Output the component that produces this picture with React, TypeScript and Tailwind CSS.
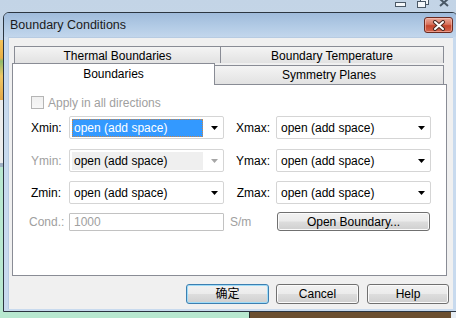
import React from "react";

const btnBg =
  "bg-[linear-gradient(to_bottom,#f2f2f2_0%,#ebebeb_48%,#dddddd_52%,#cfcfcf_100%)]";

function Arrow({ disabled }: { disabled?: boolean }) {
  return (
    <svg width="7" height="4" viewBox="0 0 7 4" className="shrink-0">
      <path d="M0 0 H7 L3.5 4 Z" fill={disabled ? "#a6a6a6" : "#000"} />
    </svg>
  );
}

function Combo({ selected, disabled }: { selected?: boolean; disabled?: boolean }) {
  return (
    <div className="w-[155px] h-[23px] border border-[#d5d5d5] rounded-[2px] bg-white flex items-center pl-[2px] pr-[5px]">
      {selected ? (
        <div className="w-[131px] h-[18px] bg-[#3399ff] border border-dotted border-[#c9864a] flex items-center pl-[1px] text-white leading-none">
          open (add space)
        </div>
      ) : disabled ? (
        <div className="w-[131px] h-[18px] bg-[#efefef] flex items-center pl-[2px] text-black leading-none">
          open (add space)
        </div>
      ) : (
        <div className="w-[131px] h-[18px] flex items-center pl-[2px] text-black leading-none">
          open (add space)
        </div>
      )}
      <div className="ml-auto">
        <Arrow disabled={disabled} />
      </div>
    </div>
  );
}

export default function App() {
  return (
    <div className="relative w-[456px] h-[318px] overflow-hidden bg-[linear-gradient(to_bottom,#c3d4e6,#d3dfec)] font-['Liberation_Sans','Noto_Sans_CJK_SC',sans-serif] text-[12px] text-black">
      {/* desktop: caption buttons of window behind */}
      <svg className="absolute left-[392px] top-0" width="64" height="10" viewBox="0 0 64 10">
        <rect x="3.5" y="2.5" width="10" height="4" fill="#f4f7fa" stroke="#4a5866" />
        <rect x="28.5" y="-1.5" width="8" height="6" fill="#f4f7fa" stroke="#4a5866" />
        <rect x="25.5" y="1.5" width="8" height="6" fill="#f4f7fa" stroke="#4a5866" />
        <path d="M48 -1 L56 6 M56 -1 L48 6" stroke="#4a5866" strokeWidth="2" />
      </svg>
      {/* desktop: left strip */}
      <div className="absolute left-0 top-[40px] w-[3px] h-[60px] bg-[linear-gradient(to_bottom,#f3c35a,#e9b046_30%,#8dbb6b_35%,#f0c866_60%,#e4a94a)]" />
      <div className="absolute left-0 top-[100px] w-[3px] h-[63px] bg-[#ececec]" />
      <div className="absolute left-0 top-[163px] w-[3px] h-[4px] bg-[#9fb0c4]" />
      <div className="absolute left-0 top-[167px] w-[3px] h-[151px] bg-[#b8e8d0]" />
      {/* desktop: bottom */}
      <div className="absolute left-0 top-[312px] w-[249px] h-[6px] bg-[#b8e8d0]" />
      <div className="absolute left-[249px] top-[312px] w-[202px] h-[6px] bg-[#6b4f30] border-l border-[#2a2a2a]" />
      <div className="absolute left-[451px] top-[312px] w-[5px] h-[6px] bg-[#e6edf4]" />

      {/* dialog */}
      <div className="absolute left-[3px] top-[12px] w-[455px] h-[300px] rounded-t-[6px] border border-[#2b3540] bg-[#c8daee] flex flex-col">
        <div className="h-[24px] shrink-0 flex items-center justify-between pl-[6px] pr-[4px] rounded-t-[5px] bg-[linear-gradient(to_bottom,#9fbbdb,#b4cce6_60%,#c2d6ec)]">
          <span className="text-[12.5px] text-[#1b1b1b] leading-none">Boundary Conditions</span>
          <div className="w-[29px] h-[16px] rounded-[3px] border border-[#6b2a20] bg-[linear-gradient(to_bottom,#eaa99a_0%,#d9735e_45%,#c4452d_55%,#d4664e_100%)] shadow-[inset_0_0_0_1px_rgba(255,210,200,0.5)] flex items-center justify-center">
            <svg width="14" height="11" viewBox="0 0 14 11">
              <path d="M3 2 L11 9 M11 2 L3 9" stroke="#4a2a24" strokeWidth="4" strokeLinecap="round" />
              <path d="M3 2 L11 9 M11 2 L3 9" stroke="#ffffff" strokeWidth="2" strokeLinecap="round" />
            </svg>
          </div>
        </div>

        <div className="flex-1 flex flex-col pl-[4px] pr-[4px] pb-[2px]">
          <div className="flex-1 bg-[#f0f0f0] border-l border-t border-[#b7cbe2] flex flex-col pt-[8px] pl-[3px]">
            {/* tabs row 1 */}
            <div className="flex h-[17px] ml-[2px]">
              <div className={`w-[206px] h-[17px] border-t border-l border-[#898c95] ${"bg-[linear-gradient(to_bottom,#f4f4f4,#e2e2e2)]"} flex items-center justify-center pt-[2px] leading-none`}>
                Thermal Boundaries
              </div>
              <div className="w-[224px] h-[17px] border-t border-l border-r border-[#898c95] bg-[linear-gradient(to_bottom,#f4f4f4,#e2e2e2)] flex items-center justify-center pt-[2px] leading-none">
                Boundary Temperature
              </div>
            </div>
            {/* tabs row 2 */}
            <div className="flex items-end h-[21px] relative z-10">
              <div className="w-[203px] h-[22px] -mb-[1px] border-t border-l border-r border-[#898c95] bg-white flex items-center justify-center pb-[1px] leading-none">
                Boundaries
              </div>
              <div className="w-[229px] h-[19px] border-t border-r border-[#898c95] bg-[linear-gradient(to_bottom,#f4f4f4,#e2e2e2)] flex items-center justify-center leading-none">
                Symmetry Planes
              </div>
            </div>
            {/* panel */}
            <div className="w-[435px] h-[192px] border border-[#898c95] bg-white flex flex-col pl-[18px]">
              <div className="flex items-center h-[13px] mt-[11px]">
                <div className="w-[13px] h-[13px] border border-[#b5b5b5] bg-[linear-gradient(to_bottom,#f0f0f0,#f7f7f7)]" />
                <span className="ml-[4px] text-[#a0a0a0] leading-none">Apply in all directions</span>
              </div>

              <div className="flex items-center h-[23px] mt-[7px]">
                <span className="w-[38px] leading-none">Xmin:</span>
                <Combo selected />
                <span className="w-[52px] pr-[6px] text-right leading-none">Xmax:</span>
                <Combo />
              </div>
              <div className="flex items-center h-[23px] mt-[10px]">
                <span className="w-[38px] text-[#a0a0a0] leading-none">Ymin:</span>
                <Combo disabled />
                <span className="w-[52px] pr-[6px] text-right leading-none">Ymax:</span>
                <Combo />
              </div>
              <div className="flex items-center h-[23px] mt-[9px]">
                <span className="w-[38px] leading-none">Zmin:</span>
                <Combo />
                <span className="w-[52px] pr-[6px] text-right leading-none">Zmax:</span>
                <Combo />
              </div>
              <div className="flex items-center h-[19px] mt-[8px]">
                <span className="w-[40px] -ml-[2px] text-[#a0a0a0] leading-none">Cond.:</span>
                <div className="w-[155px] h-[18px] border border-[#c2c2c2] rounded-[1px] bg-white flex items-center pl-[4px] text-[#a0a0a0] leading-none">
                  1000
                </div>
                <span className="w-[52px] pl-[6px] text-[#a0a0a0] leading-none">S/m</span>
                <div className={`ml-[1px] w-[153px] h-[19px] rounded-[3px] border border-[#707070] ${btnBg} shadow-[inset_0_0_0_1px_#fbfbfb] flex items-center justify-center leading-none`}>
                  Open Boundary...
                </div>
              </div>
            </div>
            {/* buttons */}
            <div className="flex justify-end pr-[4px] mt-[8px]">
              <div className={`w-[83px] h-[20px] rounded-[3px] border border-[#3c7fb1] ${btnBg} shadow-[inset_0_0_0_1px_#9fdcf8] flex items-center justify-center leading-none`}>
                确定
              </div>
              <div className={`ml-[7px] w-[83px] h-[20px] rounded-[3px] border border-[#707070] ${btnBg} shadow-[inset_0_0_0_1px_#fbfbfb] flex items-center justify-center leading-none`}>
                Cancel
              </div>
              <div className={`ml-[8px] w-[82px] h-[20px] rounded-[3px] border border-[#707070] ${btnBg} shadow-[inset_0_0_0_1px_#fbfbfb] flex items-center justify-center leading-none`}>
                Help
              </div>
            </div>
          </div>
        </div>
      </div>
    </div>
  );
}
